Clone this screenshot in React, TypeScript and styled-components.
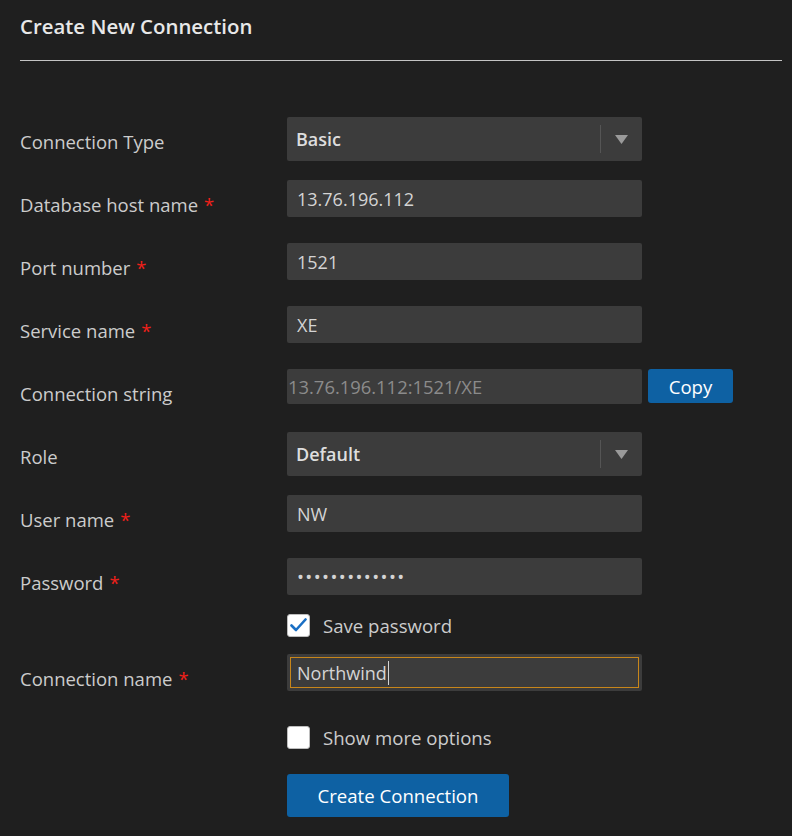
import styled, { createGlobalStyle } from "styled-components";

const GlobalStyle = createGlobalStyle`
  html, body {
    margin: 0;
    padding: 0;
    background: #1f1f1f;
  }
  body {
    font-family: "Open Sans", "Noto Sans", "Liberation Sans", sans-serif;
    color: #cccccc;
  }
`;

const Page = styled.div`
  width: 792px;
  height: 836px;
  background: #1f1f1f;
  padding: 0 10px 0 20px;
  box-sizing: border-box;
  overflow: hidden;
`;

const Header = styled.div`
  height: 60px;
  border-bottom: 1px solid #c4c4c4;
  display: flex;
  align-items: flex-start;
`;

const Title = styled.h1`
  margin: 12px 0 0;
  font-size: 20.4px;
  line-height: 28px;
  font-weight: 600;
  color: #e8e8e8;
`;

const Form = styled.div`
  display: flex;
  flex-direction: column;
  padding-top: 56px;
`;

const Row = styled.div<{ $height: number }>`
  display: grid;
  grid-template-columns: 267px 355px auto;
  align-items: start;
  height: ${(p) => p.$height}px;
`;

const Label = styled.label`
  font-size: 18.5px;
  line-height: 24px;
  padding-top: 13px;
  color: #cccccc;
  white-space: nowrap;
`;

const Required = styled.span`
  color: #f0201a;
  margin-left: 6px;
`;

const Input = styled.div<{ $muted?: boolean; $h?: number; $focus?: boolean }>`
  height: ${(p) => p.$h ?? 37}px;
  box-sizing: border-box;
  background: #3c3c3c;
  border-radius: 2px;
  display: flex;
  align-items: center;
  padding-left: ${(p) => (p.$muted ? 1 : 10)}px;
  font-size: ${(p) => (p.$muted ? 18.4 : 18)}px;
  color: ${(p) => (p.$muted ? "#8b8b8b" : "#d4d4d4")};
  white-space: nowrap;
  ${(p) =>
    p.$focus &&
    `
    outline: 1px solid #c8861a;
    outline-offset: -4px;
  `}
`;

const Caret = styled.span`
  display: inline-block;
  width: 1px;
  height: 24px;
  background: #d4d4d4;
  margin-left: 1px;
`;

const Dots = styled.span`
  letter-spacing: 1.4px;
  font-size: 18.5px;
  color: #d4d4d4;
`;

const Select = styled.div`
  height: 44px;
  background: #3c3c3c;
  border-radius: 2px;
  display: flex;
  align-items: center;
  padding-left: 9px;
  font-size: 18px;
  font-weight: 600;
  color: #dedede;
`;

const SelectValue = styled.span`
  flex: 1;
`;

const SelectSep = styled.span`
  width: 1px;
  height: 28px;
  background: #555555;
`;

const SelectArrow = styled.span`
  width: 41px;
  display: flex;
  justify-content: center;
  align-items: center;
`;

const Button = styled.button<{ $w: number; $h: number }>`
  width: ${(p) => p.$w}px;
  height: ${(p) => p.$h}px;
  background: #0e61a3;
  color: #ffffff;
  border: none;
  border-radius: 3px;
  font-family: inherit;
  font-size: 18.6px;
  padding: 0;
  cursor: pointer;
`;

const CopyCell = styled.div`
  padding-left: 6px;
`;

const CheckRow = styled.div<{ $mt: number }>`
  margin-left: 267px;
  margin-top: ${(p) => p.$mt}px;
  display: flex;
  align-items: center;
  gap: 13px;
  height: 24px;
`;

const Box = styled.span`
  width: 23px;
  height: 23px;
  box-sizing: border-box;
  background: #ffffff;
  border: 1px solid #bdbdbd;
  border-radius: 3px;
  display: flex;
  align-items: center;
  justify-content: center;
`;

const CheckText = styled.span`
  font-size: 18.6px;
  color: #cccccc;
`;

const ButtonRow = styled.div`
  margin-left: 267px;
  margin-top: 25px;
`;

function Arrow() {
  return (
    <svg width="13" height="9" viewBox="0 0 13 9">
      <path d="M0 0 H13 L6.5 9 Z" fill="#9a9a9a" />
    </svg>
  );
}

function Check() {
  return (
    <svg width="17" height="14" viewBox="0 0 17 14">
      <path
        d="M1.5 7.5 L6 12 L15.5 1.5"
        fill="none"
        stroke="#1a6fc4"
        strokeWidth="2.6"
        strokeLinecap="round"
        strokeLinejoin="round"
      />
    </svg>
  );
}

const fields = [
  { label: "Database host name", value: "13.76.196.112" },
  { label: "Port number", value: "1521" },
  { label: "Service name", value: "XE" },
];

export default function App() {
  return (
    <Page>
      <GlobalStyle />
      <Header>
        <Title>Create New Connection</Title>
      </Header>
      <Form>
        <Row $height={63}>
          <Label>Connection Type</Label>
          <Select>
            <SelectValue>Basic</SelectValue>
            <SelectSep />
            <SelectArrow>
              <Arrow />
            </SelectArrow>
          </Select>
        </Row>
        {fields.map((f) => (
          <Row $height={63} key={f.label}>
            <Label>
              {f.label}
              <Required>*</Required>
            </Label>
            <Input>{f.value}</Input>
          </Row>
        ))}
        <Row $height={63}>
          <Label>Connection string</Label>
          <Input $muted $h={35}>
            13.76.196.112:1521/XE
          </Input>
          <CopyCell>
            <Button $w={85} $h={34}>
              Copy
            </Button>
          </CopyCell>
        </Row>
        <Row $height={63}>
          <Label>Role</Label>
          <Select>
            <SelectValue>Default</SelectValue>
            <SelectSep />
            <SelectArrow>
              <Arrow />
            </SelectArrow>
          </Select>
        </Row>
        <Row $height={63}>
          <Label>
            User name<Required>*</Required>
          </Label>
          <Input>NW</Input>
        </Row>
        <Row $height={37}>
          <Label>
            Password<Required>*</Required>
          </Label>
          <Input>
            <Dots>•••••••••••••</Dots>
          </Input>
        </Row>
        <CheckRow $mt={18}>
          <Box>
            <Check />
          </Box>
          <CheckText>Save password</CheckText>
        </CheckRow>
        <Row $height={37} style={{ marginTop: 17 }}>
          <Label>
            Connection name<Required>*</Required>
          </Label>
          <Input $focus>
            Northwind
            <Caret />
          </Input>
        </Row>
        <CheckRow $mt={34}>
          <Box />
          <CheckText>Show more options</CheckText>
        </CheckRow>
        <ButtonRow>
          <Button $w={222} $h={43}>
            Create Connection
          </Button>
        </ButtonRow>
      </Form>
    </Page>
  );
}
